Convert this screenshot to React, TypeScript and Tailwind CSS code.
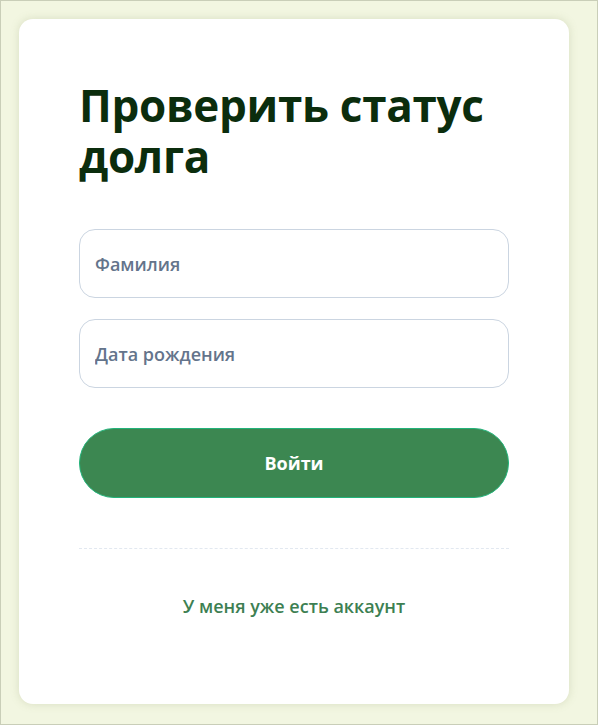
import React from "react";

const font = { fontFamily: '"Open Sans", "Noto Sans", sans-serif' };

const Field = ({ placeholder }: { placeholder: string }) => (
  <input
    type="text"
    placeholder={placeholder}
    className="h-[69px] w-full rounded-2xl border border-[#cbd5e1] bg-white px-[15px] text-[18px] font-semibold text-[#334155] outline-none placeholder:text-[#64748b]"
  />
);

export default function App() {
  return (
    <div
      style={font}
      className="h-[725px] w-[598px] border border-[#c9ceb8] bg-[#f2f6e1] p-[18px]"
    >
      <div className="flex h-[685px] w-[550px] flex-col rounded-[14px] bg-white px-[60px] pt-[61px] shadow-[0_0_8px_rgba(140,150,100,0.25)]">
        <h1 className="text-[44px] font-bold leading-[51px] tracking-[-0.3px] text-[#0b2d0d]">
          Проверить статус долга
        </h1>
        <div className="mt-[47px] flex flex-col gap-[21px]">
          <Field placeholder="Фамилия" />
          <Field placeholder="Дата рождения" />
        </div>
        <button className="mt-[40px] h-[70px] w-full rounded-full border border-[#22b37a] bg-[#3c8751] text-[18px] font-bold text-white">
          Войти
        </button>
        <div className="mt-[50px] border-t border-dashed border-[#e2e8f0]" />
        <a className="mt-[44px] text-center text-[18px] font-semibold text-[#3d7f52]">
          У меня уже есть аккаунт
        </a>
      </div>
    </div>
  );
}
